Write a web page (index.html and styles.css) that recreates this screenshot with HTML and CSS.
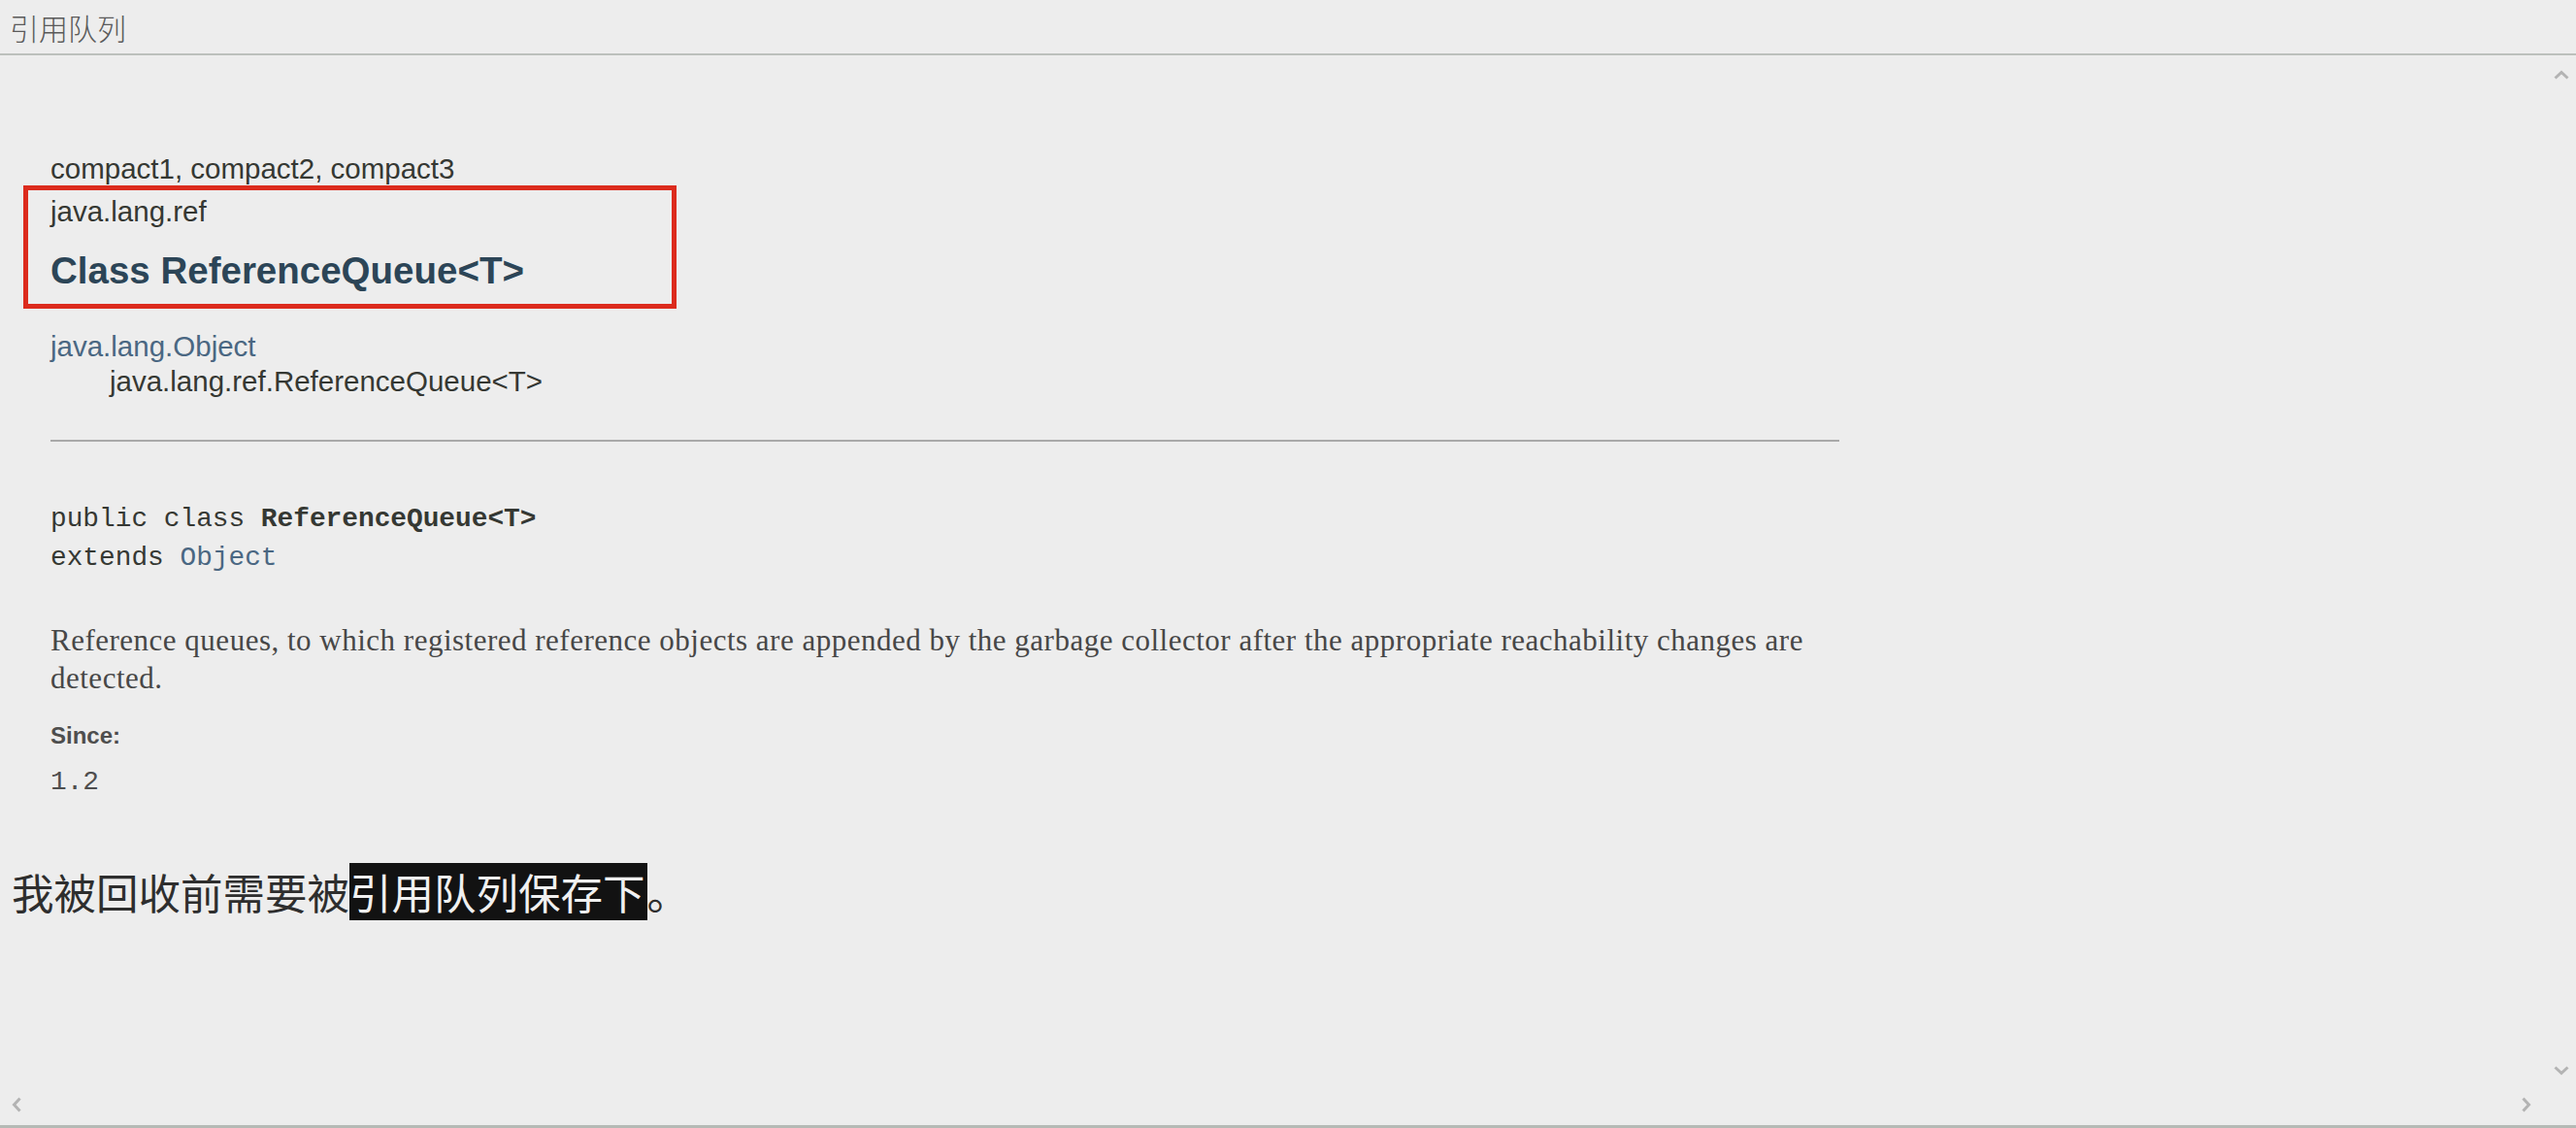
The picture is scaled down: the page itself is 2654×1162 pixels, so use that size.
FILE: index.html
```html
<!DOCTYPE html>
<html lang="zh-CN">
<head>
<meta charset="utf-8">
<title>引用队列</title>
<link rel="stylesheet" href="styles.css">
</head>
<body>
<div class="app">
  <header class="title">引用队列</header>
  <main class="pane">
    <div class="doc">
      <div class="subtitle">compact1, compact2, compact3</div>
      <div class="pkg">java.lang.ref</div>
      <h2 class="cls">Class ReferenceQueue&lt;T&gt;</h2>
      <div class="inherit">
        <div class="inh-root"><span class="link">java.lang.Object</span></div>
        <div class="inh-child">java.lang.ref.ReferenceQueue&lt;T&gt;</div>
      </div>
      <div class="rule"></div>
      <div class="sig">
        <div>public class <b>ReferenceQueue&lt;T&gt;</b></div>
        <div>extends <span class="link">Object</span></div>
      </div>
      <div class="block">Reference queues, to which registered reference objects are appended by the garbage collector after the appropriate reachability changes are detected.</div>
      <div class="since-label">Since:</div>
      <div class="since-val">1.2</div>
    </div>
    <p class="note">我被回收前需要被<span class="sel">引用队列保存下</span>。</p>

    <div class="mark"></div>

    <svg class="arr arr-up" width="16" height="10" viewBox="0 0 16 10"><path d="M1.5 8.5 L8 2.5 L14.5 8.5" fill="none" stroke="#b3b3b3" stroke-width="3"/></svg>
    <svg class="arr arr-down" width="16" height="10" viewBox="0 0 16 10"><path d="M1.5 1.5 L8 7.5 L14.5 1.5" fill="none" stroke="#b3b3b3" stroke-width="3"/></svg>
    <svg class="arr arr-left" width="10" height="16" viewBox="0 0 10 16"><path d="M8.5 1.5 L2.5 8 L8.5 14.5" fill="none" stroke="#b3b3b3" stroke-width="3"/></svg>
    <svg class="arr arr-right" width="10" height="16" viewBox="0 0 10 16"><path d="M1.5 1.5 L7.5 8 L1.5 14.5" fill="none" stroke="#b3b3b3" stroke-width="3"/></svg>
  </main>
</div>
</body>
</html>
```
FILE: styles.css
```css
html, body {
  margin: 0;
  padding: 0;
  background: #ededed;
}
.app {
  width: 2654px;
  height: 1162px;
  display: flex;
  flex-direction: column;
  overflow: hidden;
  background: #ededed;
}
.title {
  height: 55px;
  line-height: 56px;
  padding-left: 10px;
  font-family: "Noto Sans CJK SC", sans-serif;
  font-weight: 300;
  font-size: 30px;
  color: #5a5a5a;
  border-bottom: 2px solid #bcc0bc;
  flex: none;
}
.pane {
  position: relative;
  flex: 1;
  padding-top: 99px;
  border-bottom: 3px solid #b5bab5;
  overflow: hidden;
}
.doc {
  padding-left: 52px;
  width: 1843px;
  color: #353833;
  font-family: "Liberation Sans", Arial, sans-serif;
}
.subtitle {
  font-size: 29.5px;
  line-height: 36px;
}
.pkg {
  font-size: 29.5px;
  line-height: 36px;
  margin-top: 8px;
}
.cls {
  margin: 20px 0 0 0;
  font-size: 38.5px;
  line-height: 46px;
  font-weight: bold;
  color: #2c4557;
}
.inherit {
  margin-top: 37px;
  font-size: 29.5px;
  line-height: 36px;
}
.link {
  color: #4a6782;
}
.inh-child {
  padding-left: 61px;
}
.rule {
  margin-top: 42px;
  height: 2px;
  background: #a9a9a9;
}
.sig {
  margin-top: 60px;
  font-family: "Liberation Mono", "Courier New", monospace;
  font-size: 27.8px;
  line-height: 40px;
  color: #353833;
}
.sig b {
  font-weight: bold;
}
.block {
  margin-top: 45px;
  font-family: "Liberation Serif", "Times New Roman", serif;
  font-size: 31px;
  letter-spacing: 0.5px;
  line-height: 39px;
  color: #474747;
}
.since-label {
  margin-top: 23px;
  font-size: 24px;
  line-height: 34px;
  font-weight: bold;
  color: #4e4e4e;
}
.since-val {
  margin-top: 13px;
  font-family: "Liberation Mono", "Courier New", monospace;
  font-size: 27.8px;
  line-height: 36px;
  color: #4e4e4e;
}
.note {
  margin: 65px 0 0 12px;
  font-family: "Noto Sans CJK SC", sans-serif;
  font-size: 43.5px;
  line-height: 59px;
  color: #2e2e2e;
}
.sel {
  display: inline-block;
  background: #121212;
  color: #f0f0f0;
  line-height: 59px;
  height: 59px;
  padding-right: 2px;
}
.mark {
  position: absolute;
  left: 24px;
  top: 134px;
  width: 673px;
  height: 127px;
  box-sizing: border-box;
  border: 5px solid #dc2b1d;
}
.arr {
  position: absolute;
  display: block;
}
.arr-up {
  right: 7px;
  top: 15px;
}
.arr-down {
  right: 7px;
  top: 1041px;
}
.arr-left {
  left: 12px;
  top: 1073px;
}
.arr-right {
  left: 2598px;
  top: 1073px;
}
```
